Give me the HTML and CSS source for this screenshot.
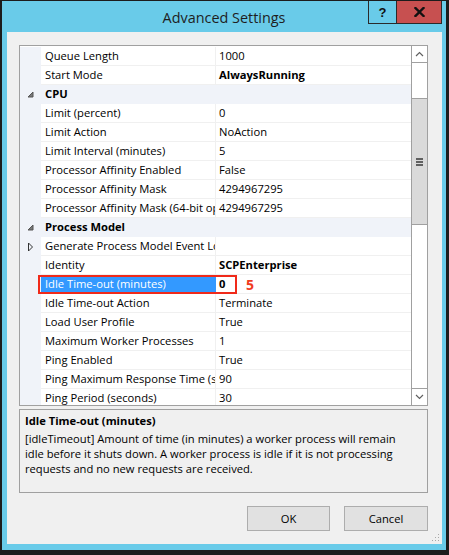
FILE: index.html
```html
<!DOCTYPE html>
<html>
<head>
<meta charset="utf-8">
<link rel="stylesheet" href="styles.css">
</head>
<body>
<div class="window">
  <div class="titlebar">
    <div></div>
    <div class="title">Advanced Settings</div>
    <div class="caption">
      <div class="cap-help">?</div>
      <div class="cap-close">
        <svg width="11" height="10" viewBox="0 0 11 10"><path d="M1.5 1 L9.5 9 M9.5 1 L1.5 9" stroke="#111" stroke-width="2.4" stroke-linecap="square"/></svg>
      </div>
    </div>
  </div>
  <div class="client">
    <div class="pgrid-wrap">
      <div class="pgrid">
        <div class="rows">
          <div class="row"><div class="m"></div><div class="n">Queue Length</div><div class="v">1000</div></div>
          <div class="row"><div class="m"></div><div class="n">Start Mode</div><div class="v b">AlwaysRunning</div></div>
          <div class="row cat"><div class="m"><svg width="7" height="7" viewBox="0 0 7 7"><path d="M6 1 L6 6 L1 6 Z" fill="#7a7a7a" stroke="#555" stroke-width="1"/></svg></div><div class="n">CPU</div><div class="v"></div></div>
          <div class="row"><div class="m"></div><div class="n">Limit (percent)</div><div class="v">0</div></div>
          <div class="row"><div class="m"></div><div class="n">Limit Action</div><div class="v">NoAction</div></div>
          <div class="row"><div class="m"></div><div class="n">Limit Interval (minutes)</div><div class="v">5</div></div>
          <div class="row"><div class="m"></div><div class="n">Processor Affinity Enabled</div><div class="v">False</div></div>
          <div class="row"><div class="m"></div><div class="n">Processor Affinity Mask</div><div class="v">4294967295</div></div>
          <div class="row"><div class="m"></div><div class="n">Processor Affinity Mask (64-bit option)</div><div class="v">4294967295</div></div>
          <div class="row cat"><div class="m"><svg width="7" height="7" viewBox="0 0 7 7"><path d="M6 1 L6 6 L1 6 Z" fill="#7a7a7a" stroke="#555" stroke-width="1"/></svg></div><div class="n">Process Model</div><div class="v"></div></div>
          <div class="row"><div class="m"><svg width="7" height="10" viewBox="0 0 7 10"><path d="M1.5 1 L5.5 5 L1.5 9 Z" fill="none" stroke="#333" stroke-width="1"/></svg></div><div class="n">Generate Process Model Event Log Entry</div><div class="v"></div></div>
          <div class="row"><div class="m"></div><div class="n">Identity</div><div class="v b">SCPEnterprise</div></div>
          <div class="row sel"><div class="m"></div><div class="n">Idle Time-out (minutes)</div><div class="v b">0</div></div>
          <div class="row"><div class="m"></div><div class="n">Idle Time-out Action</div><div class="v">Terminate</div></div>
          <div class="row"><div class="m"></div><div class="n">Load User Profile</div><div class="v">True</div></div>
          <div class="row"><div class="m"></div><div class="n">Maximum Worker Processes</div><div class="v">1</div></div>
          <div class="row"><div class="m"></div><div class="n">Ping Enabled</div><div class="v">True</div></div>
          <div class="row"><div class="m"></div><div class="n">Ping Maximum Response Time (seconds)</div><div class="v">90</div></div>
          <div class="row"><div class="m"></div><div class="n">Ping Period (seconds)</div><div class="v">30</div></div>
        </div>
        <div class="scroll">
          <div class="sb-btn up"><svg width="9" height="6" viewBox="0 0 9 6"><path d="M1 5 L4.5 1.5 L8 5" fill="none" stroke="#606060" stroke-width="1.2"/></svg></div>
          <div class="sb-track-top"></div>
          <div class="sb-thumb"><div class="grip-lines"><span></span><span></span><span></span></div></div>
          <div class="sb-track"></div>
          <div class="sb-btn down"><svg width="9" height="6" viewBox="0 0 9 6"><path d="M1 1 L4.5 4.5 L8 1" fill="none" stroke="#606060" stroke-width="1.2"/></svg></div>
        </div>
      </div>
      <div class="annot-box"></div>
      <div class="annot-num">5</div>
    </div>
    <div class="helpbox">
      <div class="help-title">Idle Time-out (minutes)</div>
      <div class="help-text">[idleTimeout] Amount of time (in minutes) a worker process will remain idle before it shuts down. A worker process is idle if it is not processing requests and no new requests are received.</div>
    </div>
    <div class="buttons">
      <div class="btn ok">OK</div>
      <div class="btn cancel">Cancel</div>
    </div>
    <svg class="sizegrip" width="8" height="8" viewBox="0 0 8 8">
      <rect x="6" y="0" width="1" height="1" fill="#a8a8a8"/>
      <rect x="3" y="3" width="1" height="1" fill="#a8a8a8"/>
      <rect x="6" y="3" width="1" height="1" fill="#a8a8a8"/>
      <rect x="0" y="6" width="1" height="1" fill="#a8a8a8"/>
      <rect x="3" y="6" width="1" height="1" fill="#a8a8a8"/>
      <rect x="6" y="6" width="1" height="1" fill="#a8a8a8"/>
    </svg>
  </div>
</div>
</body>
</html>
```
FILE: styles.css
```css
html, body {
  margin: 0;
  padding: 0;
  background: #ffffff;
}

.window {
  width: 449px;
  height: 555px;
  box-sizing: border-box;
  border-style: solid;
  border-color: #1c1c1c;
  border-width: 1px 3px 5px 2px;
  background: #69cbe9;
  display: flex;
  flex-direction: column;
  font-family: "Open Sans", "Noto Sans", sans-serif;
  color: #000;
}

.titlebar {
  height: 31px;
  flex: none;
  display: grid;
  grid-template-columns: 1fr auto 1fr;
}

.title {
  font-size: 14.4px;
  line-height: 31px;
  color: #1e1e1e;
  padding-top: 1px;
}

.caption {
  justify-self: end;
  align-self: start;
  display: flex;
  margin-right: 4px;
  height: 23px;
}

.cap-help {
  width: 28px;
  height: 23px;
  box-sizing: border-box;
  border-left: 1px solid #2a2a2a;
  border-bottom: 1px solid #2a2a2a;
  display: flex;
  align-items: center;
  justify-content: center;
  font-family: "Liberation Sans", sans-serif;
  font-weight: bold;
  font-size: 13px;
  color: #111;
}

.cap-close {
  width: 46px;
  height: 23px;
  box-sizing: border-box;
  border: 1px solid #2a2a2a;
  border-top: 0;
  background: #c75050;
  display: flex;
  align-items: center;
  justify-content: center;
}

.client {
  flex: 1;
  margin: 0 4px 6px 5px;
  padding: 13px 14px 0 12px;
  background: #f0f0f0;
  display: flex;
  flex-direction: column;
  position: relative;
}

.pgrid-wrap {
  position: relative;
}

.pgrid {
  height: 361px;
  box-sizing: border-box;
  border: 1px solid #a0a0a0;
  background: #fff;
  display: flex;
}

.rows {
  flex: 1;
  padding-top: 1px;
  overflow: hidden;
}

.row {
  display: flex;
  height: 19px;
  font-size: 11.2px;
  line-height: 18px;
}

.m {
  width: 21px;
  flex: none;
  background: #f0f3f9;
  display: flex;
  align-items: center;
  justify-content: center;
}

.n {
  width: 175px;
  flex: none;
  box-sizing: border-box;
  padding-left: 4px;
  border-right: 1px solid #f0f0f0;
  border-bottom: 1px solid #f0f0f0;
  white-space: nowrap;
  overflow: hidden;
}

.v {
  flex: 1;
  padding-left: 3px;
  border-bottom: 1px solid #f0f0f0;
  white-space: nowrap;
  overflow: hidden;
}

.b {
  font-weight: bold;
}

.row.cat {
  background: #f0f3f9;
  font-weight: bold;
}

.row.cat .n,
.row.cat .v {
  border-color: transparent;
}

.row.sel .n {
  background: #3399ff;
  border-right-color: #3399ff;
  color: #fff;
}

.scroll {
  width: 16px;
  flex: none;
  box-sizing: border-box;
  border-left: 1px solid #a0a0a0;
  display: flex;
  flex-direction: column;
}

.sb-btn {
  height: 17px;
  flex: none;
  box-sizing: border-box;
  display: flex;
  align-items: center;
  justify-content: center;
}

.sb-btn.up {
  border-bottom: 1px solid #a0a0a0;
}

.sb-btn.down {
  border-top: 1px solid #a0a0a0;
}

.sb-track-top {
  height: 35px;
  flex: none;
}

.sb-thumb {
  height: 127px;
  flex: none;
  box-sizing: border-box;
  background: #dadada;
  border-top: 1px solid #a0a0a0;
  border-bottom: 1px solid #a0a0a0;
  display: flex;
  align-items: center;
  justify-content: center;
}

.grip-lines {
  display: flex;
  flex-direction: column;
  gap: 1px;
}

.grip-lines span {
  display: block;
  width: 7px;
  height: 2px;
  background: #606060;
}

.sb-track {
  flex: 1;
}

.annot-box {
  position: absolute;
  left: 19px;
  top: 230px;
  width: 199px;
  height: 19px;
  box-sizing: border-box;
  border: 2px solid #f02a1a;
}

.annot-num {
  position: absolute;
  left: 227px;
  top: 231px;
  font-size: 14px;
  line-height: 18px;
  font-weight: bold;
  color: #f03c1e;
}

.helpbox {
  margin-top: 3px;
  height: 84px;
  box-sizing: border-box;
  border: 1px solid #a0a0a0;
  padding: 3px 24px 0 5px;
  font-size: 11.2px;
  line-height: 15px;
}

.help-title {
  font-weight: bold;
}

.help-text {
  margin-top: 3px;
}

.buttons {
  margin-top: 13px;
  display: flex;
  justify-content: flex-end;
  gap: 14px;
}

.btn {
  height: 25px;
  box-sizing: border-box;
  border: 1px solid #adadad;
  background: #e1e1e1;
  font-size: 11.2px;
  display: flex;
  align-items: center;
  justify-content: center;
}

.btn.ok {
  width: 83px;
}

.btn.cancel {
  width: 84px;
}

.sizegrip {
  position: absolute;
  right: 2px;
  bottom: 2px;
}
```
